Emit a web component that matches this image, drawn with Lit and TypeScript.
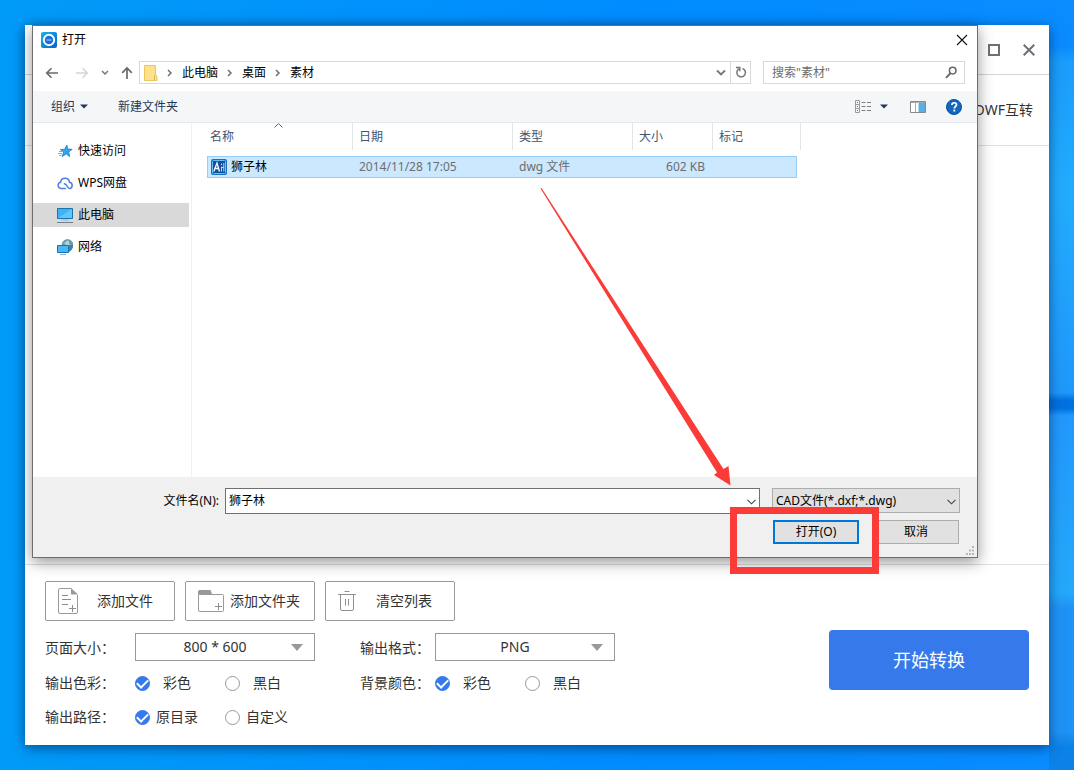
import { LitElement, html, css } from "lit";
import { customElement, state } from "lit/decorators.js";

const icons = {
  app: html`<svg width="16" height="16" viewBox="0 0 16 16"><defs><linearGradient id="g" x1="0" y1="0" x2="1" y2="1"><stop offset="0" stop-color="#16b4ea"/><stop offset="1" stop-color="#0a62c4"/></linearGradient></defs><rect width="16" height="16" rx="2" fill="url(#g)"/><circle cx="8" cy="8" r="5.200" fill="#1a6fd4" stroke="#fff" stroke-width="1.900"/><path d="M5.500 8h5" stroke="#7db6f0" stroke-width="1.600"/></svg>`,
  close: html`<svg width="12" height="12" viewBox="0 0 12 12"><path d="M1 1l10 10M11 1L1 11" stroke="#111" stroke-width="1.100"/></svg>`,
  back: html`<svg width="14" height="12" viewBox="0 0 14 12"><path d="M13 6H2M6.500 1.200L1.700 6l4.800 4.800" fill="none" stroke="#6a6a6a" stroke-width="1.600"/></svg>`,
  forward: html`<svg width="14" height="12" viewBox="0 0 14 12"><path d="M1 6h11M7.500 1.200L12.300 6l-4.800 4.800" fill="none" stroke="#d6d6d6" stroke-width="1.600"/></svg>`,
  recent: html`<svg width="8" height="6" viewBox="0 0 8 6"><path d="M1 1l3 3 3-3" fill="none" stroke="#777" stroke-width="1.500"/></svg>`,
  up: html`<svg width="12" height="14" viewBox="0 0 12 14"><path d="M6 13V2M1.200 6.800L6 2l4.800 4.800" fill="none" stroke="#6a6a6a" stroke-width="1.700"/></svg>`,
  folder: html`<svg width="14" height="16" viewBox="0 0 14 16"><path d="M.5.5h11v9l1.500 1.500v4.500H.5z" fill="#fde18c" stroke="#ecc75c"/><path d="M10.500 15v-4.500l1-1" fill="none" stroke="#ddb44a"/></svg>`,
  sep: html`<svg width="6" height="8" viewBox="0 0 6 8"><path d="M1 1l3 3-3 3" fill="none" stroke="#666" stroke-width="1.400"/></svg>`,
  down: html`<svg width="10" height="8" viewBox="0 0 10 8"><path d="M1 1.500l4 4 4-4" fill="none" stroke="#777" stroke-width="1.900"/></svg>`,
  refresh: html`<svg width="12" height="13" viewBox="0 0 12 13"><path d="M7.500 2.500a4.300 4.300 0 1 1-3.600.4M1 1.600h3.800v3.600" fill="none" stroke="#777" stroke-width="1.500"/></svg>`,
  search: html`<svg width="12" height="13" viewBox="0 0 12 13"><circle cx="7.700" cy="4.600" r="3.300" fill="none" stroke="#666" stroke-width="1.500"/><path d="M5.500 7.200L1 11.900" stroke="#666" stroke-width="1.900"/></svg>`,
  view: html`<svg width="17" height="13" viewBox="0 0 17 13"><path d="M.5.5h4v12h-4zM.5 4.500h4M.5 8.500h4" fill="none" stroke="#999"/><path d="M2 2.500h1M2 6.500h1M2 10.500h1" stroke="#4c7a9a"/><path d="M6.500 2.500h4m1.500 0h4M6.500 6.500h4m1.500 0h4M6.500 10.500h4m1.500 0h4" stroke="#808080"/></svg>`,
  caret: html`<svg width="8" height="5" viewBox="0 0 8 5"><path d="M0 .5h8l-4 4z" fill="#1e395b"/></svg>`,
  preview: html`<svg width="16" height="12" viewBox="0 0 16 12"><path d="M.5.5h15v11H.5z" fill="#fff" stroke="#888"/><path d="M1 1.500h14M5.500 1v10" stroke="#aaa"/><rect x="9" y="2" width="6" height="9" fill="#5aaee6"/><path d="M8.500 1v10" stroke="#b5d9f2"/></svg>`,
  help: html`<svg width="16" height="16" viewBox="0 0 16 16"><circle cx="8" cy="8" r="7.500" fill="#1267bf" stroke="#0a4f9c"/><path d="M5.900 6.100c0-3.100 4.600-3 4.600-.3 0 1.700-2.200 1.700-2.200 3.600" fill="none" stroke="#fff" stroke-width="1.700"/><rect x="7.400" y="10.600" width="1.900" height="1.900" fill="#fff"/></svg>`,
  star: html`<svg width="16" height="16" viewBox="0 0 16 16"><path d="M9.800 2l1 4.100 4.400.2-3.500 2.600 1 4.700-3.500-2.700-4 2.700 1.400-4.500L3.300 6.500l4.400-.3z" fill="#35a3ea" stroke="#1b7fc8" stroke-width=".8"/><path d="M2 8.500h3M1 10.500h4M2 12.500h2.500" stroke="#69b9ec"/></svg>`,
  cloud: html`<svg width="16" height="16" viewBox="0 0 16 16"><path d="M8.200 13.500H4A3.200 3.200 0 0 1 3.600 7.200a4.500 4.500 0 0 1 8.900 0 3.200 3.200 0 0 1 .1 6.300C9.800 13.500 11 9.400 7.400 8.800" fill="none" stroke="#4f7be6" stroke-width="1.500" stroke-linecap="round"/></svg>`,
  pc: html`<svg width="16" height="16" viewBox="0 0 16 16"><path d="M.5 1.500h15v10H.5z" fill="#3fb2f7" stroke="#1b73ad"/><path d="M1 11l14-9v9z" fill="#63c5fb"/><path d="M4.500 13h7" stroke="#8cb8d4"/><path d="M0 15.500h16" stroke="#707f8a"/></svg>`,
  network: html`<svg width="16" height="16" viewBox="0 0 16 16"><circle cx="10.500" cy="6" r="5.500" fill="#6c9dbb" stroke="#50829f" stroke-width=".6"/><path d="M7 3.500c2 1 2-2 4-2s0 3 2 4 0 3-2 4" fill="#b5d3bd"/><path d="M12 6h4c0 4-2 6-4 7z" fill="#4b7f9f"/><path d="M.5 6.500h11v7H.5z" fill="#48b9f8" stroke="#1b73ad"/><path d="M3 15.500h6" stroke="#8cb8d4"/></svg>`,
  dwg: html`<svg width="16" height="16" viewBox="0 0 16 16"><rect width="16" height="16" rx="2" fill="#0f74c4"/><rect x="1.500" y="1.500" width="13" height="13" rx="1" fill="#174f9c" stroke="#63bff0"/><path d="M2.800 12.500L6 4l2.500 8.500M4.200 9.500h3.600" fill="none" stroke="#fff" stroke-width="1.300"/><path d="M10.500 4.500v1.500m0 1.500v5M12.800 4v8.500M10.500 8.500h2.300" fill="none" stroke="#b9dcf7"/></svg>`,
  sort: html`<svg width="9" height="5" viewBox="0 0 9 5"><path d="M.5 4.500l4-4 4 4" fill="none" stroke="#666"/></svg>`,
  thin: html`<svg width="9" height="6" viewBox="0 0 9 6"><path d="M.5.8l4 4 4-4" fill="none" stroke="#444" stroke-width="1.100"/></svg>`,
  grip: html`<svg width="9" height="9" viewBox="0 0 9 9"><path d="M7 0h2v2H7zM4 3.500h2v2H4zM7 3.500h2v2H7zM1 7h2v2H1zM4 7h2v2H4zM7 7h2v2H7z" fill="#b5b5b5"/></svg>`,
  addFile: html`<svg width="20" height="26" viewBox="0 0 20 26"><path d="M13 .5H2A1.500 1.500 0 0 0 .5 2v22A1.500 1.500 0 0 0 2 25.500h16a1.500 1.500 0 0 0 1.500-1.500V7" fill="none" stroke="#999"/><path d="M13 0l7 6.500h-7z" fill="#999"/><path d="M4 7.500h6M4 11.500h9M4 16.500h6M14.500 17v7M11 20.500h7" fill="none" stroke="#8c8c8c"/></svg>`,
  addFolder: html`<svg width="26" height="22" viewBox="0 0 26 22"><path d="M0 4V1.500A1.500 1.500 0 0 1 1.500 0h11L14 4z" fill="#999"/><path d="M.5 4.500h24a1 1 0 0 1 1 1v15a1 1 0 0 1-1 1H2A1.500 1.500 0 0 1 .5 20z" fill="none" stroke="#999"/><path d="M20.500 13v7M17 16.500h7" stroke="#8c8c8c"/></svg>`,
  trash: html`<svg width="18" height="20" viewBox="0 0 18 20"><path d="M0 3.500h18M6.500.5h5M2.500 4v14A1.500 1.500 0 0 0 4 19.500h10a1.500 1.500 0 0 0 1.500-1.500V4M7.500 8v6.500M10.500 8v6.500" fill="none" stroke="#8f8f8f"/></svg>`,
  tri: html`<svg width="12" height="7" viewBox="0 0 12 7"><path d="M0 0h12L6 7z" fill="#999"/></svg>`,
  maximize: html`<svg width="12" height="12" viewBox="0 0 12 12"><rect x="1" y="1" width="10" height="10" fill="none" stroke="#6e7078" stroke-width="2"/></svg>`,
  closeBig: html`<svg width="12" height="12" viewBox="0 0 12 12"><path d="M.7.7l10.600 10.600M11.300.7L.7 11.300" stroke="#6e7078" stroke-width="2"/></svg>`,
};

const reset = css`
  * { box-sizing: border-box; }
  svg { display: block; flex: none; }
  button, input, select { font: inherit; color: inherit; margin: 0; }
  button { display: flex; align-items: center; justify-content: center; padding: 0; border: 0; background: none; }
  input, select { outline: 0; border-radius: 0; }
`;

@customElement("open-dialog")
class OpenDialog extends LitElement {
  @state() private place = "此电脑";

  private places = [
    { name: "快速访问", icon: icons.star },
    { name: "WPS网盘", icon: icons.cloud },
    { name: "此电脑", icon: icons.pc },
    { name: "网络", icon: icons.network },
  ];

  static styles = [reset, css`
    :host { display: flex; flex-direction: column; font-size: 12px; line-height: 16px; color: #000; background: #fff; border: 1px solid #6b6f73; box-shadow: 0 4px 14px rgba(0, 0, 0, .42); }
    .title { display: flex; align-items: center; gap: 5px; height: 28px; padding: 0 9px 0 8px; }
    .title h1 { flex: 1; margin: 0; font-size: 12px; font-weight: 400; }
    .nav { display: flex; align-items: center; height: 37px; padding: 0 12px; }
    .arrows { display: flex; align-items: center; gap: 12px; width: 94px; }
    .arrows .fwd { padding-left: 4px; }
    .address { display: flex; align-items: center; flex: 1; height: 23px; border: 1px solid #d9d9d9; padding-left: 4px; }
    .crumbs { display: flex; align-items: center; gap: 9px; flex: 1; }
    .crumbs a { color: inherit; text-decoration: none; }
    .refresh { width: 20px; height: 21px; margin-left: 4px; border-left: 1px solid #d9d9d9; }
    .search { display: flex; align-items: center; width: 202px; height: 23px; margin-left: 12px; padding: 0 7px 0 8px; border: 1px solid #d9d9d9; }
    .search input { flex: 1; min-width: 0; border: 0; padding: 0; background: none; }
    .search input::placeholder { color: #6d6d6d; opacity: 1; }
    .tools { display: flex; align-items: center; height: 32px; padding: 0 15px 0 18px; background: #f5f6f7; border-bottom: 1px solid #e6e9ec; color: #1e395b; }
    .tools .organize { gap: 5px; margin-right: 30px; }
    .tools .right { display: flex; align-items: center; margin-left: auto; }
    .views { gap: 8px; margin-right: 22px; }
    .pane { margin-right: 20px; }
    .body { display: flex; flex: 1; min-height: 354px; }
    .places { display: flex; flex-direction: column; gap: 8px; width: 159px; padding: 16px 2px 0 0; border-right: 1px solid #f0f0f0; }
    .places button { height: 24px; padding-left: 24px; gap: 5px; justify-content: flex-start; }
    .places button.on { background: #d9d9d9; }
    .files { padding-left: 15px; flex: 1; }
    table { border-spacing: 0; table-layout: fixed; width: 590px; }
    th { padding: 0 0 6px; font-weight: 400; text-align: left; color: #44546f; }
    th div { position: relative; height: 27px; padding: 6px 0 0 6px; border-right: 1px solid #e2e6ea; }
    th.name div { padding-left: 3px; }
    th svg { position: absolute; left: 46%; top: 0; }
    .name { width: 146px; } .date { width: 160px; } .type { width: 120px; } .size { width: 80px; } .tag { width: 84px; }
    th.tag div { width: 88px; }
    td { height: 22px; padding: 0 0 0 6px; background: #cce8ff; border: solid #99cdf5; border-width: 1px 0; color: #6d6d6d; }
    td.name { padding-left: 3px; border-left-width: 1px; color: #000; }
    td.tag { border-right-width: 1px; }
    td.size { text-align: right; padding: 0 8px 0 0; }
    .file { display: flex; align-items: center; gap: 4px; }
    .foot { position: relative; padding: 11px 17px 13px 0; background: #f0f0f0; }
    .row { display: flex; align-items: center; }
    .row label { width: 192px; padding-right: 6px; text-align: right; }
    .combo { position: relative; display: flex; height: 26px; }
    .combo svg { position: absolute; right: 4px; top: 11px; pointer-events: none; }
    .filename { flex: 1; margin-right: 12px; }
    .filename input { width: 100%; padding: 0 20px 0 3px; border: 1px solid #707070; background: #fff; }
    .filter { width: 188px; height: 25px; align-self: flex-start; }
    .filter select { width: 100%; appearance: none; padding: 0 20px 0 3px; border: 1px solid #adadad; background: #e1e1e1; }
    .actions { display: flex; justify-content: flex-end; gap: 14px; padding: 6px 1px 0 0; }
    .actions button { width: 86px; height: 24px; background: #e1e1e1; border: 1px solid #adadad; }
    .actions .primary { border: 2px solid #0078d7; }
    .grip { position: absolute; right: 3px; bottom: 2px; }
    .mark { position: absolute; right: 98px; bottom: -17px; width: 149px; height: 67px; border: 7px solid #fb3b38; pointer-events: none; }
    .arrow { position: absolute; right: 245px; bottom: 71px; pointer-events: none; }
  `];

  render() {
    return html`
      <header class="title">${icons.app}<h1>打开</h1><button aria-label="关闭">${icons.close}</button></header>
      <nav class="nav">
        <div class="arrows">
          <button aria-label="后退">${icons.back}</button>
          <button class="fwd" aria-label="前进">${icons.forward}</button>
          <button aria-label="最近位置">${icons.recent}</button>
          <button aria-label="向上">${icons.up}</button>
        </div>
        <div class="address">
          <div class="crumbs">${icons.folder}${["此电脑", "桌面", "素材"].map((c) => html`${icons.sep}<a href="#">${c}</a>`)}</div>
          <button aria-label="历史记录">${icons.down}</button>
          <button class="refresh" aria-label="刷新">${icons.refresh}</button>
        </div>
        <div class="search"><input type="search" aria-label="搜索" placeholder='搜索"素材"' />${icons.search}</div>
      </nav>
      <div class="tools">
        <button class="organize">组织 ${icons.caret}</button>
        <button>新建文件夹</button>
        <div class="right">
          <button class="views" aria-label="视图">${icons.view}${icons.caret}</button>
          <button class="pane" aria-label="预览窗格">${icons.preview}</button>
          <button aria-label="帮助">${icons.help}</button>
        </div>
      </div>
      <div class="body">
        <nav class="places">
          ${this.places.map((p) => html`<button class=${p.name === this.place ? "on" : ""} @click=${() => (this.place = p.name)}>${p.icon}${p.name}</button>`)}
        </nav>
        <div class="files">
          <table>
            <thead><tr>
              <th class="name"><div>名称${icons.sort}</div></th>
              <th class="date"><div>日期</div></th>
              <th class="type"><div>类型</div></th>
              <th class="size"><div>大小</div></th>
              <th class="tag"><div>标记</div></th>
            </tr></thead>
            <tbody><tr>
              <td class="name"><div class="file">${icons.dwg}狮子林</div></td>
              <td class="date">2014/11/28 17:05</td>
              <td class="type">dwg 文件</td>
              <td class="size">602 KB</td>
              <td class="tag"></td>
            </tr></tbody>
          </table>
        </div>
      </div>
      <footer class="foot">
        <div class="row">
          <label for="fn">文件名(N):</label>
          <div class="combo filename"><input id="fn" type="text" .value=${"狮子林"} />${icons.thin}</div>
          <div class="combo filter"><select aria-label="文件类型"><option>CAD文件(*.dxf;*.dwg)</option></select>${icons.thin}</div>
        </div>
        <div class="actions"><button class="primary">打开(O)</button><button>取消</button></div>
        <div class="grip">${icons.grip}</div>
        <div class="mark"></div>
        <svg class="arrow" width="192" height="299" viewBox="0 0 192 299"><path d="M.5 1.500L1.500 1 183.500 282 188.500 279 190.500 298.500 174 288 177 285.500z" fill="#fb3b38"/></svg>
      </footer>`;
  }
}

@customElement("app-root")
class AppRoot extends LitElement {
  static styles = [reset, css`
    :host {
      display: flex; min-height: 100vh; box-sizing: border-box; padding: 25px;
      font: 14px/20px "Noto Sans", "Noto Sans CJK SC", sans-serif; color: #333;
      background:
        linear-gradient(180deg, #0a8cff 0 6%, #1a9dfb 8%, #22acff 25%, #1f98fb 51%, #0071e0 52%, #0071e0 53%, #2298fd 54%, #24a9fb 77%, #1f93f5 79%, #1f93f5 95%, #0b82e8 97%) right / 25px 100% no-repeat,
        linear-gradient(90deg, #009bf8, #008cff 60%, #0a8cff);
    }
    .window { position: relative; display: flex; flex-direction: column; flex: 1; min-width: 0; background: #fff; box-shadow: 0 3px 12px rgba(0, 30, 80, .6); }
    .bar { display: flex; align-items: center; justify-content: flex-end; gap: 23px; height: 50px; padding-right: 14px; border-bottom: 1px solid #d5d5d5; }
    .tabs { display: flex; align-items: center; justify-content: flex-end; height: 71px; padding-right: 16px; border-bottom: 1px solid #e0e0e0; }
    .tabs a { color: inherit; text-decoration: none; }
    .list { flex: 1; min-height: 418px; border-bottom: 1px solid #dcdfe3; }
    .dialog { position: absolute; left: 7px; right: 71px; top: 0; }
    .panel { display: flex; align-items: flex-start; justify-content: space-between; padding: 16px 20px 11px; }
    .buttons { display: flex; gap: 10px; }
    .buttons button { width: 130px; height: 40px; padding: 0 2px 0 12px; border: 1px solid #999; border-radius: 2px; justify-content: flex-start; }
    .buttons span { flex: 1; text-align: center; }
    .buttons .wide { padding-right: 8px; }
    .options { display: grid; grid-template-columns: 90px 225px 75px 180px; align-items: center; margin-top: 8px; }
    .options > * { height: 34px; display: flex; align-items: center; }
    .options > .drop { position: relative; width: 180px; height: 28px; margin: 4px 0 5px; }
    .options > .tall { height: 37px; }
    .drop select { width: 100%; height: 28px; appearance: none; padding: 0 20px 0 0; border: 1px solid #999; background: #fff; text-align: center; text-align-last: center; }
    .drop svg { position: absolute; right: 12px; top: 11px; pointer-events: none; }
    .choice { display: flex; align-items: center; width: 90px; gap: 13px; }
    .near .choice { gap: 6px; }
    .choice input { appearance: none; flex: none; display: flex; justify-content: center; width: 15px; height: 15px; border: 1px solid #999; border-radius: 50%; background: #fff; }
    .choice input:checked { border-color: #3579ea; background: #3579ea; }
    .choice input:checked::before { content: ""; width: 9px; height: 5px; margin-top: 2px; border: solid #fff; border-width: 0 0 2px 2px; rotate: -45deg; }
    .start { width: 200px; height: 60px; margin-top: 49px; border-radius: 4px; background: #3579ea; color: #fff; font-size: 18px; line-height: 24px; }
  `];

  private radios(name: string, items: string[], near = false) {
    return html`<div class=${near ? "near" : ""} role="radiogroup">
      ${items.map((t, i) => html`<label class="choice"><input type="radio" name=${name} ?checked=${i === 0} />${t}</label>`)}
    </div>`;
  }

  render() {
    return html`
      <main class="window">
        <header class="bar"><button aria-label="最大化">${icons.maximize}</button><button aria-label="关闭">${icons.closeBig}</button></header>
        <nav class="tabs"><a href="#">DWG DWF互转</a></nav>
        <section class="list"></section>
        <section class="panel">
          <div>
            <div class="buttons">
              <button>${icons.addFile}<span>添加文件</span></button>
              <button class="wide">${icons.addFolder}<span>添加文件夹</span></button>
              <button>${icons.trash}<span>清空列表</span></button>
            </div>
            <div class="options">
              <label class="tall" for="size">页面大小：</label>
              <div class="drop"><select id="size"><option>800 * 600</option></select>${icons.tri}</div>
              <label class="tall" for="fmt">输出格式：</label>
              <div class="drop"><select id="fmt"><option>PNG</option></select>${icons.tri}</div>
              <div>输出色彩：</div>${this.radios("color", ["彩色", "黑白"])}
              <div>背景颜色：</div>${this.radios("bg", ["彩色", "黑白"])}
              <div>输出路径：</div>${this.radios("path", ["原目录", "自定义"], true)}
            </div>
          </div>
          <button class="start">开始转换</button>
        </section>
        <open-dialog class="dialog"></open-dialog>
      </main>`;
  }
}
